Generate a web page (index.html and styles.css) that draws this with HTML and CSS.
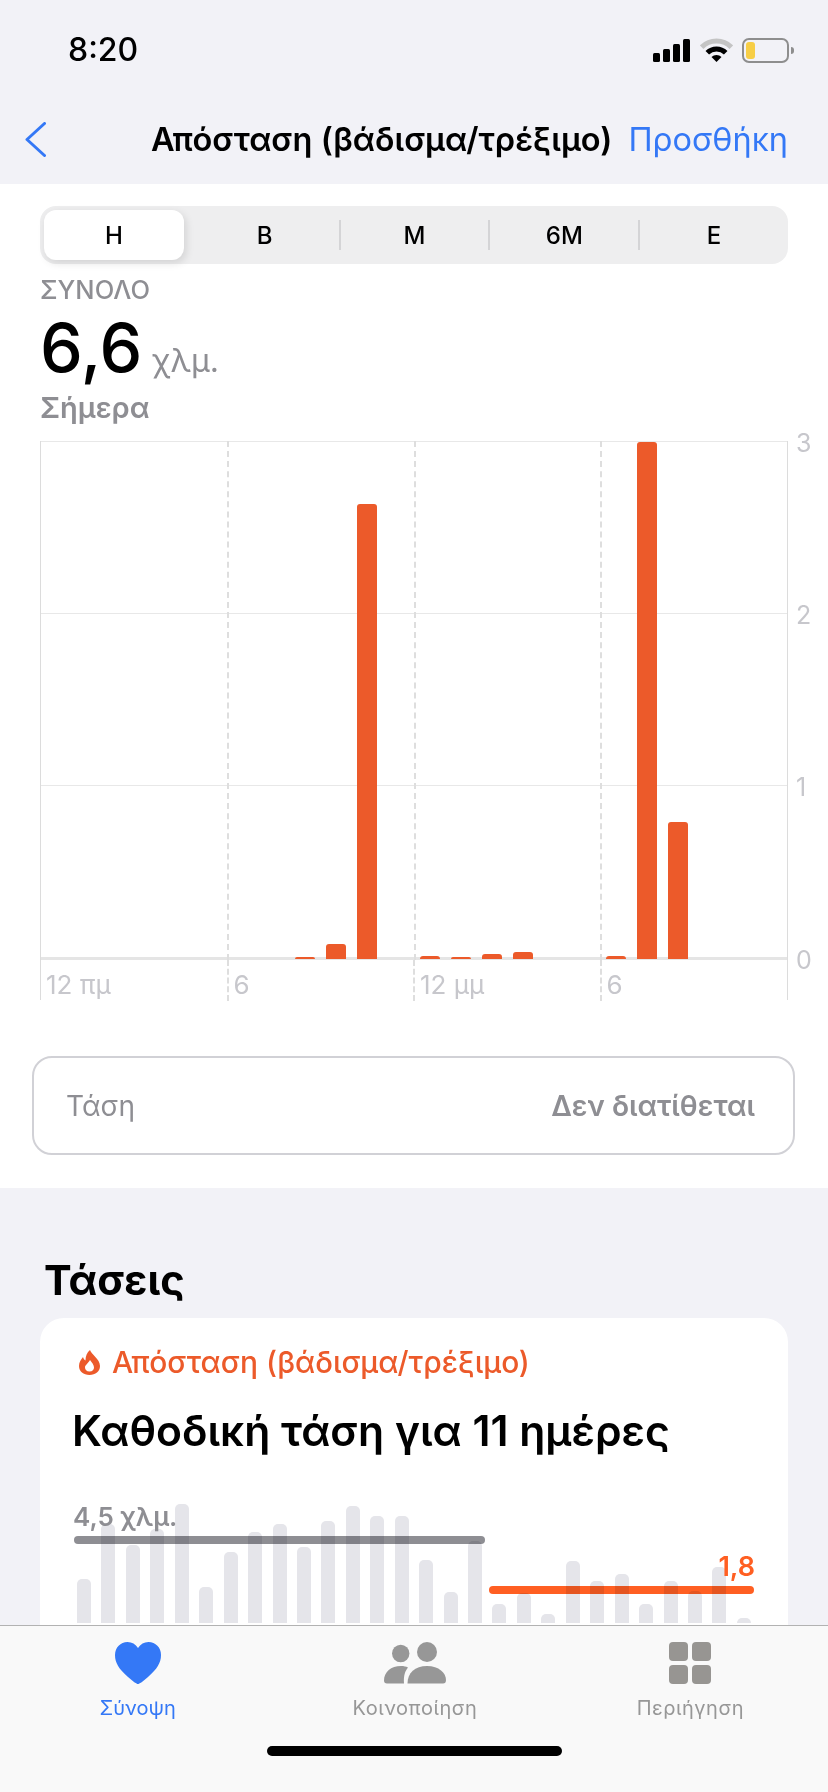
FILE: index.html
```html
<!DOCTYPE html>
<html lang="el">
<head>
    <meta charset="UTF-8">
    <meta name="viewport" content="width=device-width, initial-scale=1.0">
    <title>Απόσταση (βάδισμα/τρέξιμο)</title>
    <link rel="stylesheet" href="styles.css">
</head>
<body>
    <div class="screen">
        <header class="top">
            <div class="status-bar">
                <span class="clock">8:20</span>
                <div class="status-icons">
                    <svg class="signal" width="37" height="23" viewBox="0 0 37 23">
                        <rect x="0" y="14" width="7" height="9" rx="1.5"/>
                        <rect x="10" y="10" width="7" height="13" rx="1.5"/>
                        <rect x="20" y="5" width="7" height="18" rx="1.5"/>
                        <rect x="30" y="0" width="7" height="23" rx="1.5"/>
                    </svg>
                    <svg class="wifi" width="33" height="24" viewBox="0 0 33 24">
                        <path d="M1.65 9.15A21 21 0 0 1 31.35 9.15" fill="none" stroke="#c4c4c4" stroke-width="5"/>
                        <path d="M7.3 14.8A13 13 0 0 1 25.7 14.8" fill="none" stroke="#000" stroke-width="5"/>
                        <path d="M16.5 24L11.5 19A7 7 0 0 1 21.5 19Z"/>
                    </svg>
                    <div class="battery"><div class="battery-level"></div></div>
                    <div class="battery-nub"></div>
                </div>
            </div>
            <nav class="nav-bar">
                <svg class="back" width="21" height="35" viewBox="0 0 21 35">
                    <path d="M19.5 1.5L2 17.5L19.5 33.5" fill="none" stroke="#3478f6" stroke-width="3" stroke-linecap="round" stroke-linejoin="round"/>
                </svg>
                <h1 class="nav-title">Απόσταση (βάδισμα/τρέξιμο)</h1>
                <span class="nav-action">Προσθήκη</span>
            </nav>
        </header>

        <section class="detail">
            <div class="segments">
                <div class="segment active">Η</div>
                <div class="segment">Β</div>
                <div class="segment divided">Μ</div>
                <div class="segment divided">6Μ</div>
                <div class="segment divided">Ε</div>
            </div>

            <div class="summary">
                <div class="summary-label">ΣΥΝΟΛΟ</div>
                <div class="summary-value">6,6<span class="summary-unit">χλμ.</span></div>
                <div class="summary-date">Σήμερα</div>
            </div>

            <div class="chart">
                <div class="plot">
                    <div class="grid-rows">
                        <div class="grid-row"><span class="y-label">3</span></div>
                        <div class="grid-row"><span class="y-label">2</span></div>
                        <div class="grid-row"><span class="y-label">1</span></div>
                        <span class="y-label y-zero">0</span>
                    </div>
                    <div class="grid-cols"><div></div><div></div><div></div><div></div></div>
                    <div class="bars">
                        <i></i><i></i><i></i><i></i><i></i><i></i><i></i><i></i>
                        <i style="height:2px"></i>
                        <i style="height:15px"></i>
                        <i style="height:455px"></i>
                        <i></i>
                        <i style="height:3px"></i>
                        <i style="height:2px"></i>
                        <i style="height:5px"></i>
                        <i style="height:7px"></i>
                        <i></i><i></i>
                        <i style="height:3px"></i>
                        <i style="height:517px"></i>
                        <i style="height:137px"></i>
                        <i></i><i></i><i></i>
                    </div>
                </div>
                <div class="x-axis">
                    <div>12 πμ</div>
                    <div>6</div>
                    <div>12 μμ</div>
                    <div>6</div>
                </div>
            </div>

            <div class="trend-box">
                <span class="trend-name">Τάση</span>
                <span class="trend-value">Δεν διατίθεται</span>
            </div>
        </section>

        <section class="trends">
            <h2>Τάσεις</h2>
            <div class="card">
                <div class="card-label">
                    <svg class="flame" width="21" height="25" viewBox="0 0 21 25">
                        <path fill="#ec5a2a" fill-rule="evenodd" d="M11 0C12 4 21 9 21 16C21 21.5 16.5 25 10.5 25C4.5 25 0 21.5 0 16C0 12 2 9.500 4 7C4.500 9 5.500 10 6.500 10.500C6.500 6 8 2.500 11 0ZM10.500 21.500C7.500 21.500 6 19.500 6 17.500C6 15 9 13.500 11 10C13 12.500 15 15 15 17.500C15 19.500 13.500 21.500 10.500 21.500Z"/>
                    </svg>
                    Απόσταση (βάδισμα/τρέξιμο)
                </div>
                <div class="card-title">Καθοδική τάση για 11 ημέρες</div>
                <div class="mini-chart">
                    <div class="mini-bars">
                        <i style="height:44px"></i><i style="height:99px"></i><i style="height:78px"></i><i style="height:94px"></i>
                        <i style="height:119px"></i><i style="height:36px"></i><i style="height:71px"></i><i style="height:91px"></i>
                        <i style="height:99px"></i><i style="height:76px"></i><i style="height:102px"></i><i style="height:117px"></i>
                        <i style="height:107px"></i><i style="height:107px"></i><i style="height:63px"></i><i style="height:31px"></i>
                        <i style="height:82px"></i><i style="height:19px"></i><i style="height:30px"></i><i style="height:9px"></i>
                        <i style="height:62px"></i><i style="height:42px"></i><i style="height:49px"></i><i style="height:19px"></i>
                        <i style="height:42px"></i><i style="height:32px"></i><i style="height:56px"></i><i style="height:5px"></i>
                    </div>
                    <span class="avg-label avg-label-old">4,5 χλμ.</span>
                    <div class="avg-line avg-line-old"></div>
                    <span class="avg-label avg-label-new">1,8</span>
                    <div class="avg-line avg-line-new"></div>
                </div>
            </div>
        </section>

        <footer class="tab-bar">
            <div class="tabs">
                <div class="tab active">
                    <svg width="46" height="42" viewBox="0 0 46 42">
                        <path fill="#3478f6" d="M23 42C21.500 42 19 40 13 35C4 27 0 21 0 13C0 5.500 5.500 0 12.500 0C17 0 20.500 2.300 23 6C25.500 2.300 29 0 33.500 0C40.500 0 46 5.500 46 13C46 21 42 27 33 35C27 40 24.500 42 23 42Z"/>
                    </svg>
                    <span>Σύνοψη</span>
                </div>
                <div class="tab">
                    <svg width="62" height="42" viewBox="0 0 62 42">
                        <g fill="#979797">
                            <circle cx="16.700" cy="11.500" r="8.700"/>
                            <circle cx="43" cy="10" r="10"/>
                            <path d="M23.500 41.500C23.500 31 31 24 43 24C55 24 62 31 62 38C62 40.500 61 41.500 59 41.500Z"/>
                            <path d="M0 38.500C0 30 7 24 17 24C20 24 22 24.500 24 25.500C21 29 19.500 34 20 41.500L3 41.500C1 41.500 0 40.500 0 38.500Z"/>
                        </g>
                    </svg>
                    <span>Κοινοποίηση</span>
                </div>
                <div class="tab">
                    <svg width="42" height="42" viewBox="0 0 42 42">
                        <g fill="#979592">
                            <rect x="0" y="0" width="19" height="19" rx="4"/>
                            <rect x="23" y="0" width="19" height="19" rx="4"/>
                            <rect x="0" y="23" width="19" height="19" rx="4"/>
                            <rect x="23" y="23" width="19" height="19" rx="4"/>
                        </g>
                    </svg>
                    <span>Περιήγηση</span>
                </div>
            </div>
            <div class="home-indicator"></div>
        </footer>
    </div>
</body>
</html>
```

FILE: styles.css
```css
* {
    box-sizing: border-box;
}
body {
    margin: 0;
    font-family: 'Inter', 'Liberation Sans', sans-serif;
    background-color: #f2f2f7;
    color: #000;
}
.screen {
    position: relative;
    width: 828px;
    height: 1792px;
    overflow: hidden;
}

/* status + nav */
.top {
    height: 184px;
    padding-top: 34px;
}
.status-bar {
    display: flex;
    justify-content: space-between;
    align-items: center;
    height: 32px;
    padding: 0 34px 0 68px;
}
.clock {
    font-size: 32px;
    font-weight: 500;
    line-height: 32px;
}
.status-icons {
    display: flex;
    align-items: center;
}
.signal {
    margin-right: 10px;
}
.wifi {
    margin-right: 9px;
}
.battery {
    width: 47px;
    height: 25px;
    border: 2px solid #8e8e8e;
    border-radius: 7px;
    padding: 2px;
}
.battery-level {
    width: 9px;
    height: 17px;
    background-color: #f7ce46;
    border-radius: 3px;
}
.battery-nub {
    width: 3px;
    height: 7px;
    margin-left: 2px;
    background-color: #8e8e8e;
    border-radius: 0 3px 3px 0;
}
.nav-bar {
    display: flex;
    align-items: center;
    margin-top: 49px;
    height: 48px;
    padding: 0 40px 0 25px;
}
.nav-title {
    margin: 0 0 0 105px;
    font-size: 32.5px;
    font-weight: 600;
    white-space: nowrap;
}
.nav-action {
    margin-left: auto;
    font-size: 32.5px;
    color: #3478f6;
    white-space: nowrap;
}

/* white detail block */
.detail {
    height: 1004px;
    padding-top: 22px;
    background-color: #fff;
}
.segments {
    display: flex;
    width: 748px;
    height: 58px;
    margin-left: 40px;
    background-color: #eeeeef;
    border-radius: 16px;
    padding: 4px 0;
}
.segment {
    display: flex;
    align-items: center;
    justify-content: center;
    width: 150px;
    padding-left: 2px;
    font-size: 24px;
    font-weight: 500;
}
.segment.active {
    width: 140px;
    margin: 0 5px 0 4px;
    padding-left: 0;
    background-color: #fff;
    border-radius: 12px;
    box-shadow: 2px 3px 8px rgba(0,0,0,0.12);
}
.segment.divided {
    background: linear-gradient(#d4d4d6, #d4d4d6) left center / 2px 30px no-repeat;
}
.summary {
    margin-left: 40px;
    height: 177px;
    padding-top: 11px;
}
.summary-label {
    font-size: 25.5px;
    font-weight: 500;
    line-height: 30px;
    color: #8e8e93;
}
.summary-value {
    font-size: 68px;
    font-weight: 500;
    line-height: 84px;
}
.summary-unit {
    margin-left: 10px;
    font-size: 32px;
    font-weight: 400;
    line-height: 32px;
    color: #8e8e93;
}
.summary-date {
    margin-top: 2px;
    font-size: 29px;
    font-weight: 600;
    line-height: 34px;
    color: #8e8e93;
}

/* day chart */
.chart {
    width: 748px;
    margin-left: 40px;
}
.plot {
    position: relative;
    height: 519px;
    border-left: 1px solid #dcdcdc;
    border-right: 1px solid #dcdcdc;
}
.grid-rows {
    display: flex;
    flex-direction: column;
    height: 100%;
    border-bottom: 3px solid #e5e5e5;
}
.grid-row {
    position: relative;
    flex: 1;
    border-top: 1px solid #e8e8e8;
}
.y-label {
    position: absolute;
    left: 100%;
    top: -13px;
    margin-left: 9px;
    font-size: 25px;
    line-height: 28px;
    color: #c7c7cc;
}
.y-zero {
    top: auto;
    bottom: -14px;
}
.grid-cols {
    position: absolute;
    top: 0;
    right: 0;
    bottom: 0;
    left: -1px;
    display: grid;
    grid-template-columns: repeat(4, 1fr);
}
.grid-cols div + div {
    border-left: 2px dashed #dedede;
}
.bars {
    position: absolute;
    top: 0;
    right: 0;
    bottom: 1px;
    left: 0;
    display: grid;
    grid-template-columns: repeat(24, 1fr);
    align-items: end;
    justify-items: center;
}
.bars i {
    display: block;
    width: 20px;
    background-color: #ec5a2a;
    border-radius: 3px 3px 0 0;
}
.x-axis {
    display: grid;
    grid-template-columns: repeat(4, 1fr);
    height: 40px;
    border-left: 1px solid #dcdcdc;
    border-right: 1px solid #dcdcdc;
    font-size: 26px;
    line-height: 32px;
    color: #c7c7cc;
}
.x-axis div {
    padding: 9px 0 0 5px;
}
.x-axis div + div {
    margin-left: -1px;
    border-left: 2px dashed #dedede;
}
.trend-box {
    display: flex;
    justify-content: space-between;
    align-items: center;
    width: 763px;
    height: 99px;
    margin: 56px 0 0 32px;
    padding: 0 38px 0 32px;
    border: 2px solid #d1d1d6;
    border-radius: 20px;
    font-size: 28.6px;
    color: #8e8e93;
}
.trend-name {
    font-size: 28px;
}
.trend-value {
    font-weight: 600;
}

/* trends */
.trends {
    padding-top: 68px;
}
.trends h2 {
    margin: 0 0 0 44px;
    font-size: 41.5px;
    font-weight: 700;
    line-height: 48px;
}
.card {
    height: 330px;
    margin: 14px 40px 0;
    padding: 27px 0 0 33px;
    background-color: #fff;
    border-radius: 24px 24px 0 0;
}
.card-label {
    display: flex;
    align-items: center;
    gap: 12px;
    padding-left: 6px;
    font-size: 29.9px;
    font-weight: 500;
    line-height: 34px;
    color: #ec5a2a;
}
.card-title {
    margin: 27px 0 0 -1px;
    font-size: 42.6px;
    font-weight: 600;
    line-height: 50px;
    white-space: nowrap;
}
.mini-chart {
    position: relative;
    width: 674px;
    height: 119px;
    margin: 48px 0 0 4px;
}
.mini-bars {
    display: grid;
    grid-template-columns: repeat(28, 14px);
    justify-content: space-between;
    align-items: end;
    height: 100%;
}
.mini-bars i {
    display: block;
    background-color: #e5e5ea;
    border-radius: 5px 5px 0 0;
}
.avg-line {
    position: absolute;
    height: 8px;
    border-radius: 4px;
    mix-blend-mode: multiply;
}
.avg-line-old {
    left: -3px;
    top: 32px;
    width: 411px;
    background-color: #8e8e93;
}
.avg-line-new {
    left: 412px;
    top: 82px;
    width: 265px;
    background-color: #ff5f22;
}
.avg-label {
    position: absolute;
    font-size: 26px;
    font-weight: 600;
    line-height: 30px;
}
.avg-label-old {
    left: -4px;
    top: -2px;
    color: #8e8e93;
}
.avg-label-new {
    right: -4px;
    top: 48px;
    font-size: 27px;
    color: #ff5f22;
}

/* bottom tabs */
.tab-bar {
    position: absolute;
    left: 0;
    right: 0;
    bottom: 0;
    height: 167px;
    background-color: #f9f9f9;
    border-top: 1px solid #b2b2b2;
}
.tabs {
    display: flex;
    padding-top: 16px;
}
.tab {
    display: flex;
    flex: 1;
    flex-direction: column;
    align-items: center;
    gap: 12px;
    font-size: 20px;
    line-height: 24px;
    letter-spacing: 0.5px;
    color: #979797;
}
.tab.active {
    padding-right: 2px;
    letter-spacing: 0;
    color: #3478f6;
}
.home-indicator {
    width: 295px;
    height: 10px;
    margin: 26px auto 0;
    background-color: #000;
    border-radius: 5px;
}
```
